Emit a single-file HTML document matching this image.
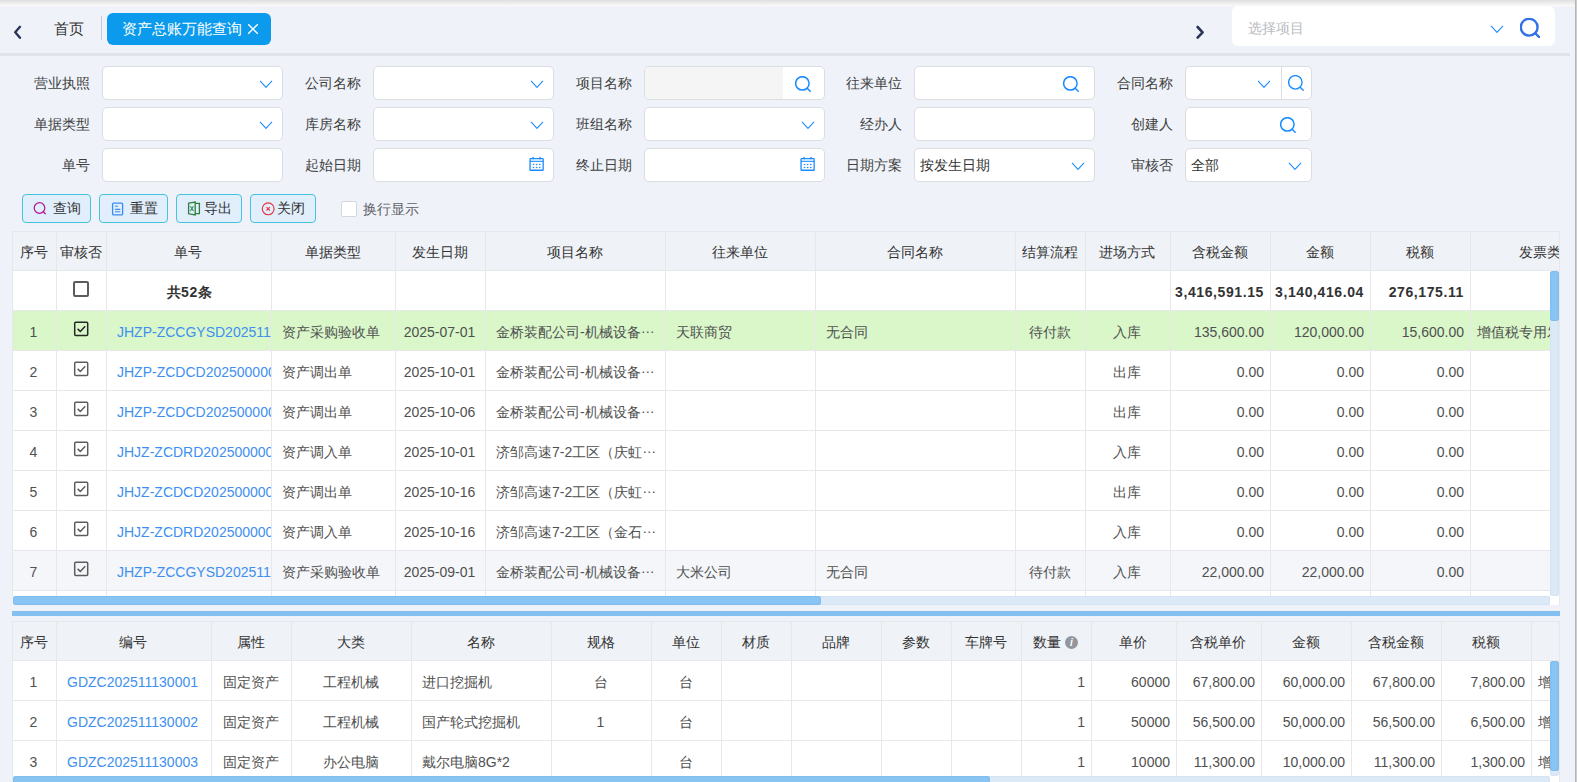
<!DOCTYPE html>
<html><head><meta charset="utf-8"><title>资产总账万能查询</title>
<style>
html,body{margin:0;padding:0}
body{width:1577px;height:782px;overflow:hidden;position:relative;background:#eff3f9;font-family:"Liberation Sans",sans-serif;font-size:14px;color:#333}
</style></head><body>
<div style="position:absolute;left:0;top:0;width:1577px;height:7px;background:linear-gradient(#dfdfdf,#eeeeee 45%,#f8f8f8 80%,#eff3f9)"></div>
<div style="position:absolute;left:1575px;top:0px;width:2px;height:782px;background:linear-gradient(90deg,#a9a9a9,#d9d9d9)"></div>
<svg style="position:absolute;left:12px;top:24px" width="12" height="17" viewBox="0 0 12 17"><path d="M8 2.8 L3.2 8.3 L8 13.8" fill="none" stroke="#2b3557" stroke-width="2.4" stroke-linecap="round" stroke-linejoin="round"/></svg>
<div style="position:absolute;left:54px;top:18px;width:40px;height:22px;font-size:15px;line-height:22px;color:#333">首页</div>
<div style="position:absolute;left:101px;top:16px;width:1px;height:24px;background:#c9ccd2"></div>
<div style="position:absolute;left:107px;top:13px;width:164px;height:32px;background:#0c9bec;border-radius:6px"></div>
<div style="position:absolute;left:122px;top:18px;width:125px;height:22px;font-size:15px;line-height:22px;color:#fff;white-space:nowrap">资产总账万能查询</div>
<svg style="position:absolute;left:247px;top:23px" width="12" height="12" viewBox="0 0 12 12"><path d="M1.2 1.2 L10.8 10.8 M10.8 1.2 L1.2 10.8" stroke="#fff" stroke-width="1.3"/></svg>
<svg style="position:absolute;left:1194px;top:24px" width="12" height="17" viewBox="0 0 12 17"><path d="M3.6 3 L8.6 8.3 L3.6 13.6" fill="none" stroke="#2b3557" stroke-width="2.6" stroke-linecap="round" stroke-linejoin="round"/></svg>
<div style="position:absolute;left:1232px;top:6px;width:323px;height:40px;background:#fff;border-radius:6px"></div>
<div style="position:absolute;left:1248px;top:17px;width:80px;height:22px;font-size:14px;line-height:22px;color:#b9bcc2">选择项目</div>
<svg style="position:absolute;left:1490px;top:25px" width="14" height="8.4" viewBox="0 0 14 8.4"><path d="M1 1 L7.0 7.4 L13 1" fill="none" stroke="#1a8cff" stroke-width="1.1"/></svg>
<svg style="position:absolute;left:1520px;top:18px" width="20" height="20" viewBox="0 0 20 20"><circle cx="9.200000000000001" cy="9.200000000000001" r="8.4" fill="none" stroke="#3272e6" stroke-width="2.4"/><path d="M15.248000000000001 15.248000000000001 L19.2 19.2" stroke="#3272e6" stroke-width="2.4" stroke-linecap="round"/></svg>
<div style="position:absolute;left:0px;top:53px;width:1570px;height:3px;background:#dfe4ec"></div>
<div style="position:absolute;left:-10px;top:66px;width:100px;height:34px;font-size:14px;line-height:34px;color:#404040;text-align:right;white-space:nowrap">营业执照</div>
<div style="position:absolute;left:102px;top:66px;width:181px;height:34px;background:#fff;border:1px solid #dadde2;border-radius:5px;box-sizing:border-box"></div>
<svg style="position:absolute;left:259px;top:80px" width="14" height="8.4" viewBox="0 0 14 8.4"><path d="M1 1 L7.0 7.4 L13 1" fill="none" stroke="#1a8cff" stroke-width="1.1"/></svg>
<div style="position:absolute;left:261px;top:66px;width:100px;height:34px;font-size:14px;line-height:34px;color:#404040;text-align:right;white-space:nowrap">公司名称</div>
<div style="position:absolute;left:373px;top:66px;width:181px;height:34px;background:#fff;border:1px solid #dadde2;border-radius:5px;box-sizing:border-box"></div>
<svg style="position:absolute;left:530px;top:80px" width="14" height="8.4" viewBox="0 0 14 8.4"><path d="M1 1 L7.0 7.4 L13 1" fill="none" stroke="#1a8cff" stroke-width="1.1"/></svg>
<div style="position:absolute;left:532px;top:66px;width:100px;height:34px;font-size:14px;line-height:34px;color:#404040;text-align:right;white-space:nowrap">项目名称</div>
<div style="position:absolute;left:644px;top:66px;width:181px;height:34px;background:#fff;border:1px solid #dadde2;border-radius:5px;box-sizing:border-box"></div>
<div style="position:absolute;left:645px;top:67px;width:138px;height:32px;background:#f5f5f5;border-radius:4px 0 0 4px"></div>
<svg style="position:absolute;left:795px;top:76px" width="16" height="16" viewBox="0 0 16 16"><circle cx="7.36" cy="7.36" r="6.72" fill="none" stroke="#1a8cff" stroke-width="1.5"/><path d="M12.1984 12.1984 L15.2 15.2" stroke="#1a8cff" stroke-width="1.5" stroke-linecap="round"/></svg>
<div style="position:absolute;left:802px;top:66px;width:100px;height:34px;font-size:14px;line-height:34px;color:#404040;text-align:right;white-space:nowrap">往来单位</div>
<div style="position:absolute;left:914px;top:66px;width:181px;height:34px;background:#fff;border:1px solid #dadde2;border-radius:5px;box-sizing:border-box"></div>
<svg style="position:absolute;left:1063px;top:76px" width="16" height="16" viewBox="0 0 16 16"><circle cx="7.36" cy="7.36" r="6.72" fill="none" stroke="#1a8cff" stroke-width="1.5"/><path d="M12.1984 12.1984 L15.2 15.2" stroke="#1a8cff" stroke-width="1.5" stroke-linecap="round"/></svg>
<div style="position:absolute;left:1073px;top:66px;width:100px;height:34px;font-size:14px;line-height:34px;color:#404040;text-align:right;white-space:nowrap">合同名称</div>
<div style="position:absolute;left:1185px;top:66px;width:127px;height:34px;background:#fff;border:1px solid #dadde2;border-radius:5px;box-sizing:border-box"></div>
<svg style="position:absolute;left:1257px;top:80px" width="14" height="8.4" viewBox="0 0 14 8.4"><path d="M1 1 L7.0 7.4 L13 1" fill="none" stroke="#1a8cff" stroke-width="1.1"/></svg>
<div style="position:absolute;left:1281px;top:67px;width:1px;height:32px;background:#dadde2"></div>
<svg style="position:absolute;left:1288px;top:75px" width="16" height="16" viewBox="0 0 16 16"><circle cx="7.36" cy="7.36" r="6.72" fill="none" stroke="#1a8cff" stroke-width="1.4"/><path d="M12.1984 12.1984 L15.2 15.2" stroke="#1a8cff" stroke-width="1.4" stroke-linecap="round"/></svg>
<div style="position:absolute;left:-10px;top:107px;width:100px;height:34px;font-size:14px;line-height:34px;color:#404040;text-align:right;white-space:nowrap">单据类型</div>
<div style="position:absolute;left:102px;top:107px;width:181px;height:34px;background:#fff;border:1px solid #dadde2;border-radius:5px;box-sizing:border-box"></div>
<svg style="position:absolute;left:259px;top:121px" width="14" height="8.4" viewBox="0 0 14 8.4"><path d="M1 1 L7.0 7.4 L13 1" fill="none" stroke="#1a8cff" stroke-width="1.1"/></svg>
<div style="position:absolute;left:261px;top:107px;width:100px;height:34px;font-size:14px;line-height:34px;color:#404040;text-align:right;white-space:nowrap">库房名称</div>
<div style="position:absolute;left:373px;top:107px;width:181px;height:34px;background:#fff;border:1px solid #dadde2;border-radius:5px;box-sizing:border-box"></div>
<svg style="position:absolute;left:530px;top:121px" width="14" height="8.4" viewBox="0 0 14 8.4"><path d="M1 1 L7.0 7.4 L13 1" fill="none" stroke="#1a8cff" stroke-width="1.1"/></svg>
<div style="position:absolute;left:532px;top:107px;width:100px;height:34px;font-size:14px;line-height:34px;color:#404040;text-align:right;white-space:nowrap">班组名称</div>
<div style="position:absolute;left:644px;top:107px;width:181px;height:34px;background:#fff;border:1px solid #dadde2;border-radius:5px;box-sizing:border-box"></div>
<svg style="position:absolute;left:801px;top:121px" width="14" height="8.4" viewBox="0 0 14 8.4"><path d="M1 1 L7.0 7.4 L13 1" fill="none" stroke="#1a8cff" stroke-width="1.1"/></svg>
<div style="position:absolute;left:802px;top:107px;width:100px;height:34px;font-size:14px;line-height:34px;color:#404040;text-align:right;white-space:nowrap">经办人</div>
<div style="position:absolute;left:914px;top:107px;width:181px;height:34px;background:#fff;border:1px solid #dadde2;border-radius:5px;box-sizing:border-box"></div>
<div style="position:absolute;left:1073px;top:107px;width:100px;height:34px;font-size:14px;line-height:34px;color:#404040;text-align:right;white-space:nowrap">创建人</div>
<div style="position:absolute;left:1185px;top:107px;width:127px;height:34px;background:#fff;border:1px solid #dadde2;border-radius:5px;box-sizing:border-box"></div>
<svg style="position:absolute;left:1280px;top:117px" width="16" height="16" viewBox="0 0 16 16"><circle cx="7.36" cy="7.36" r="6.72" fill="none" stroke="#1a8cff" stroke-width="1.5"/><path d="M12.1984 12.1984 L15.2 15.2" stroke="#1a8cff" stroke-width="1.5" stroke-linecap="round"/></svg>
<div style="position:absolute;left:-10px;top:148px;width:100px;height:34px;font-size:14px;line-height:34px;color:#404040;text-align:right;white-space:nowrap">单号</div>
<div style="position:absolute;left:102px;top:148px;width:181px;height:34px;background:#fff;border:1px solid #dadde2;border-radius:5px;box-sizing:border-box"></div>
<div style="position:absolute;left:261px;top:148px;width:100px;height:34px;font-size:14px;line-height:34px;color:#404040;text-align:right;white-space:nowrap">起始日期</div>
<div style="position:absolute;left:373px;top:148px;width:181px;height:34px;background:#fff;border:1px solid #dadde2;border-radius:5px;box-sizing:border-box"></div>
<svg style="position:absolute;left:528px;top:156px" width="17" height="16" viewBox="0 0 17 16"><rect x="2.05" y="2.55" width="13.1" height="11.7" rx="0.6" fill="none" stroke="#1a8cff" stroke-width="1.3"/><path d="M2 5.3 H15.2" stroke="#1a8cff" stroke-width="1.1"/><rect x="4.4" y="0.9" width="1.3" height="2.4" fill="#1a8cff"/><rect x="11.4" y="0.9" width="1.3" height="2.4" fill="#1a8cff"/><rect x="4.8" y="7.9" width="1.5" height="1.2" fill="#1a8cff"/><rect x="7.9" y="7.9" width="1.5" height="1.2" fill="#1a8cff"/><rect x="11.0" y="7.9" width="1.5" height="1.2" fill="#1a8cff"/><rect x="4.8" y="10.9" width="1.5" height="1.2" fill="#1a8cff"/><rect x="7.9" y="10.9" width="1.5" height="1.2" fill="#1a8cff"/><rect x="11.0" y="10.9" width="1.5" height="1.2" fill="#1a8cff"/></svg>
<div style="position:absolute;left:532px;top:148px;width:100px;height:34px;font-size:14px;line-height:34px;color:#404040;text-align:right;white-space:nowrap">终止日期</div>
<div style="position:absolute;left:644px;top:148px;width:181px;height:34px;background:#fff;border:1px solid #dadde2;border-radius:5px;box-sizing:border-box"></div>
<svg style="position:absolute;left:799px;top:156px" width="17" height="16" viewBox="0 0 17 16"><rect x="2.05" y="2.55" width="13.1" height="11.7" rx="0.6" fill="none" stroke="#1a8cff" stroke-width="1.3"/><path d="M2 5.3 H15.2" stroke="#1a8cff" stroke-width="1.1"/><rect x="4.4" y="0.9" width="1.3" height="2.4" fill="#1a8cff"/><rect x="11.4" y="0.9" width="1.3" height="2.4" fill="#1a8cff"/><rect x="4.8" y="7.9" width="1.5" height="1.2" fill="#1a8cff"/><rect x="7.9" y="7.9" width="1.5" height="1.2" fill="#1a8cff"/><rect x="11.0" y="7.9" width="1.5" height="1.2" fill="#1a8cff"/><rect x="4.8" y="10.9" width="1.5" height="1.2" fill="#1a8cff"/><rect x="7.9" y="10.9" width="1.5" height="1.2" fill="#1a8cff"/><rect x="11.0" y="10.9" width="1.5" height="1.2" fill="#1a8cff"/></svg>
<div style="position:absolute;left:802px;top:148px;width:100px;height:34px;font-size:14px;line-height:34px;color:#404040;text-align:right;white-space:nowrap">日期方案</div>
<div style="position:absolute;left:914px;top:148px;width:181px;height:34px;background:#fff;border:1px solid #dadde2;border-radius:5px;box-sizing:border-box"></div>
<svg style="position:absolute;left:1071px;top:162px" width="14" height="8.4" viewBox="0 0 14 8.4"><path d="M1 1 L7.0 7.4 L13 1" fill="none" stroke="#1a8cff" stroke-width="1.1"/></svg>
<div style="position:absolute;left:920px;top:148px;width:120px;height:34px;font-size:14px;line-height:34px;color:#333;white-space:nowrap">按发生日期</div>
<div style="position:absolute;left:1073px;top:148px;width:100px;height:34px;font-size:14px;line-height:34px;color:#404040;text-align:right;white-space:nowrap">审核否</div>
<div style="position:absolute;left:1185px;top:148px;width:127px;height:34px;background:#fff;border:1px solid #dadde2;border-radius:5px;box-sizing:border-box"></div>
<svg style="position:absolute;left:1288px;top:162px" width="14" height="8.4" viewBox="0 0 14 8.4"><path d="M1 1 L7.0 7.4 L13 1" fill="none" stroke="#1a8cff" stroke-width="1.1"/></svg>
<div style="position:absolute;left:1191px;top:148px;width:120px;height:34px;font-size:14px;line-height:34px;color:#333;white-space:nowrap">全部</div>
<div style="position:absolute;left:22px;top:194px;width:69px;height:29px;background:#e1eefb;border:1px solid #45c3dd;border-radius:4px;box-sizing:border-box"></div>
<svg style="position:absolute;left:32px;top:201px" width="16" height="16" viewBox="0 0 16 16"><circle cx="7.5" cy="7" r="5.3" fill="none" stroke="#b5198f" stroke-width="1.25"/><path d="M11.3 10.8 L13.3 12.8" stroke="#b5198f" stroke-width="1.25" stroke-linecap="round"/></svg>
<div style="position:absolute;left:53px;top:194px;width:40px;height:29px;font-size:14px;line-height:29px;color:#333">查询</div>
<div style="position:absolute;left:99px;top:194px;width:69px;height:29px;background:#e1eefb;border:1px solid #45c3dd;border-radius:4px;box-sizing:border-box"></div>
<svg style="position:absolute;left:111px;top:202px" width="13" height="14" viewBox="0 0 13 14"><rect x="1.6" y="1.1" width="10" height="11.8" rx="1" fill="none" stroke="#3b8df3" stroke-width="1.3"/><path d="M4 4.2 H7 M4 7.4 H9.3 M4 9.8 H9.3" stroke="#3b8df3" stroke-width="1.1"/></svg>
<div style="position:absolute;left:130px;top:194px;width:40px;height:29px;font-size:14px;line-height:29px;color:#333">重置</div>
<div style="position:absolute;left:176px;top:194px;width:66px;height:29px;background:#e1eefb;border:1px solid #45c3dd;border-radius:4px;box-sizing:border-box"></div>
<svg style="position:absolute;left:187px;top:201px" width="15" height="15" viewBox="0 0 15 15"><path d="M1.6 2.2 L8.2 1 L8.2 14 L1.6 12.8 Z" fill="none" stroke="#2f7f3a" stroke-width="1.3"/><path d="M8.2 2.3 H12.4 V12.6 H8.2" fill="none" stroke="#2f7f3a" stroke-width="1.3"/><path d="M3.3 5.3 L6.5 10 M6.5 5.3 L3.3 10" stroke="#2a8a5a" stroke-width="1.1"/></svg>
<div style="position:absolute;left:204px;top:194px;width:40px;height:29px;font-size:14px;line-height:29px;color:#333">导出</div>
<div style="position:absolute;left:250px;top:194px;width:66px;height:29px;background:#e1eefb;border:1px solid #45c3dd;border-radius:4px;box-sizing:border-box"></div>
<svg style="position:absolute;left:261px;top:202px" width="15" height="14" viewBox="0 0 15 14"><circle cx="7.2" cy="6.8" r="5.9" fill="none" stroke="#e8363f" stroke-width="1.15"/><path d="M5.5 5.1 L8.9 8.5 M8.9 5.1 L5.5 8.5" stroke="#e8363f" stroke-width="1.1"/></svg>
<div style="position:absolute;left:277px;top:194px;width:40px;height:29px;font-size:14px;line-height:29px;color:#333">关闭</div>
<div style="position:absolute;left:341px;top:201px;width:16px;height:16px;background:#fff;border:1px solid #d4d7dc;border-radius:2px;box-sizing:border-box"></div>
<div style="position:absolute;left:363px;top:197px;width:70px;height:24px;font-size:14px;line-height:24px;color:#606266">换行显示</div>
<div style="position:absolute;left:12px;top:231px;width:1547px;height:365px;overflow:hidden;background:#fff">
<div style="position:absolute;left:0;top:0;width:1547px;height:39px;background:#eff2f7"></div>
<div style="position:absolute;left:1px;top:2px;width:43px;height:38px;line-height:38px;text-align:center;padding:0 3px 0 1px;box-sizing:border-box;white-space:nowrap;overflow:hidden;font-size:14px;color:#333;line-height:39px">序号</div>
<div style="position:absolute;left:45px;top:2px;width:49px;height:38px;line-height:38px;text-align:center;padding:0 3px 0 1px;box-sizing:border-box;white-space:nowrap;overflow:hidden;font-size:14px;color:#333;line-height:39px">审核否</div>
<div style="position:absolute;left:95px;top:2px;width:164px;height:38px;line-height:38px;text-align:center;padding:0 3px 0 1px;box-sizing:border-box;white-space:nowrap;overflow:hidden;font-size:14px;color:#333;line-height:39px">单号</div>
<div style="position:absolute;left:260px;top:2px;width:123px;height:38px;line-height:38px;text-align:center;padding:0 3px 0 1px;box-sizing:border-box;white-space:nowrap;overflow:hidden;font-size:14px;color:#333;line-height:39px">单据类型</div>
<div style="position:absolute;left:384px;top:2px;width:89px;height:38px;line-height:38px;text-align:center;padding:0 3px 0 1px;box-sizing:border-box;white-space:nowrap;overflow:hidden;font-size:14px;color:#333;line-height:39px">发生日期</div>
<div style="position:absolute;left:474px;top:2px;width:179px;height:38px;line-height:38px;text-align:center;padding:0 3px 0 1px;box-sizing:border-box;white-space:nowrap;overflow:hidden;font-size:14px;color:#333;line-height:39px">项目名称</div>
<div style="position:absolute;left:654px;top:2px;width:149px;height:38px;line-height:38px;text-align:center;padding:0 3px 0 1px;box-sizing:border-box;white-space:nowrap;overflow:hidden;font-size:14px;color:#333;line-height:39px">往来单位</div>
<div style="position:absolute;left:804px;top:2px;width:199px;height:38px;line-height:38px;text-align:center;padding:0 3px 0 1px;box-sizing:border-box;white-space:nowrap;overflow:hidden;font-size:14px;color:#333;line-height:39px">合同名称</div>
<div style="position:absolute;left:1004px;top:2px;width:69px;height:38px;line-height:38px;text-align:center;padding:0 3px 0 1px;box-sizing:border-box;white-space:nowrap;overflow:hidden;font-size:14px;color:#333;line-height:39px">结算流程</div>
<div style="position:absolute;left:1074px;top:2px;width:84px;height:38px;line-height:38px;text-align:center;padding:0 3px 0 1px;box-sizing:border-box;white-space:nowrap;overflow:hidden;font-size:14px;color:#333;line-height:39px">进场方式</div>
<div style="position:absolute;left:1159px;top:2px;width:99px;height:38px;line-height:38px;text-align:center;padding:0 3px 0 1px;box-sizing:border-box;white-space:nowrap;overflow:hidden;font-size:14px;color:#333;line-height:39px">含税金额</div>
<div style="position:absolute;left:1259px;top:2px;width:99px;height:38px;line-height:38px;text-align:center;padding:0 3px 0 1px;box-sizing:border-box;white-space:nowrap;overflow:hidden;font-size:14px;color:#333;line-height:39px">金额</div>
<div style="position:absolute;left:1359px;top:2px;width:99px;height:38px;line-height:38px;text-align:center;padding:0 3px 0 1px;box-sizing:border-box;white-space:nowrap;overflow:hidden;font-size:14px;color:#333;line-height:39px">税额</div>
<div style="position:absolute;left:1459px;top:2px;width:153px;height:38px;line-height:38px;text-align:center;padding:0 3px 0 1px;box-sizing:border-box;white-space:nowrap;overflow:hidden;font-size:14px;color:#333;line-height:39px">发票类型</div>
<div style="position:absolute;left:0;top:40px;width:1547px;height:40px;background:#fff"></div>
<svg style="position:absolute;left:61px;top:50px" width="16" height="16" viewBox="0 0 16 16"><rect x="1" y="1" width="14" height="14" rx="1" fill="none" stroke="#5c5c5c" stroke-width="2"/></svg>
<div style="position:absolute;left:95px;top:42px;width:164px;height:39px;line-height:39px;text-align:center;padding:0 3px 0 1px;box-sizing:border-box;white-space:nowrap;overflow:hidden;font-size:14px;color:#333;font-weight:bold;letter-spacing:0.6px;text-overflow:clip;padding-right:0">共52条</div>
<div style="position:absolute;left:1159px;top:42px;width:99px;height:39px;line-height:39px;text-align:right;padding:0 6px 0 4px;box-sizing:border-box;white-space:nowrap;overflow:hidden;font-size:14px;color:#333;font-weight:bold;letter-spacing:0.6px">3,416,591.15</div>
<div style="position:absolute;left:1259px;top:42px;width:99px;height:39px;line-height:39px;text-align:right;padding:0 6px 0 4px;box-sizing:border-box;white-space:nowrap;overflow:hidden;font-size:14px;color:#333;font-weight:bold;letter-spacing:0.6px">3,140,416.04</div>
<div style="position:absolute;left:1359px;top:42px;width:99px;height:39px;line-height:39px;text-align:right;padding:0 6px 0 4px;box-sizing:border-box;white-space:nowrap;overflow:hidden;font-size:14px;color:#333;font-weight:bold;letter-spacing:0.6px">276,175.11</div>
<div style="position:absolute;left:0;top:80px;width:1547px;height:40px;background:#d9f7c9"></div>
<div style="position:absolute;left:1px;top:82px;width:43px;height:39px;line-height:39px;text-align:center;padding:0 3px 0 1px;box-sizing:border-box;white-space:nowrap;overflow:hidden;font-size:14px;color:#505050">1</div>
<svg style="position:absolute;left:61px;top:90px" width="16" height="16" viewBox="0 0 16 16"><rect x="1.7" y="1.2" width="13" height="13.4" rx="1" fill="none" stroke="#262626" stroke-width="1.5"/><path d="M4.6 7.9 L7.3 10.4 L12.2 5.2" fill="none" stroke="#262626" stroke-width="1.5"/></svg>
<div style="position:absolute;left:95px;top:82px;width:164px;height:39px;line-height:39px;text-align:left;padding:0 6px 0 10px;box-sizing:border-box;white-space:nowrap;overflow:hidden;font-size:14px;color:#3e8ff0;text-overflow:clip;padding-right:0">JHZP-ZCCGYSD2025111</div>
<div style="position:absolute;left:260px;top:82px;width:123px;height:39px;line-height:39px;text-align:left;padding:0 6px 0 10px;box-sizing:border-box;white-space:nowrap;overflow:hidden;font-size:14px;color:#505050">资产采购验收单</div>
<div style="position:absolute;left:384px;top:82px;width:89px;height:39px;line-height:39px;text-align:center;padding:0 3px 0 1px;box-sizing:border-box;white-space:nowrap;overflow:hidden;font-size:14px;color:#505050">2025-07-01</div>
<div style="position:absolute;left:474px;top:82px;width:179px;height:39px;line-height:39px;text-align:left;padding:0 6px 0 10px;box-sizing:border-box;white-space:nowrap;overflow:hidden;font-size:14px;color:#505050">金桥装配公司-机械设备<span style="position:relative;top:-4px;letter-spacing:-0.5px">…</span></div>
<div style="position:absolute;left:654px;top:82px;width:149px;height:39px;line-height:39px;text-align:left;padding:0 6px 0 10px;box-sizing:border-box;white-space:nowrap;overflow:hidden;font-size:14px;color:#505050">天联商贸</div>
<div style="position:absolute;left:804px;top:82px;width:199px;height:39px;line-height:39px;text-align:left;padding:0 6px 0 10px;box-sizing:border-box;white-space:nowrap;overflow:hidden;font-size:14px;color:#505050">无合同</div>
<div style="position:absolute;left:1004px;top:82px;width:69px;height:39px;line-height:39px;text-align:center;padding:0 3px 0 1px;box-sizing:border-box;white-space:nowrap;overflow:hidden;font-size:14px;color:#505050">待付款</div>
<div style="position:absolute;left:1074px;top:82px;width:84px;height:39px;line-height:39px;text-align:center;padding:0 3px 0 1px;box-sizing:border-box;white-space:nowrap;overflow:hidden;font-size:14px;color:#505050">入库</div>
<div style="position:absolute;left:1159px;top:82px;width:99px;height:39px;line-height:39px;text-align:right;padding:0 6px 0 4px;box-sizing:border-box;white-space:nowrap;overflow:hidden;font-size:14px;color:#505050">135,600.00</div>
<div style="position:absolute;left:1259px;top:82px;width:99px;height:39px;line-height:39px;text-align:right;padding:0 6px 0 4px;box-sizing:border-box;white-space:nowrap;overflow:hidden;font-size:14px;color:#505050">120,000.00</div>
<div style="position:absolute;left:1359px;top:82px;width:99px;height:39px;line-height:39px;text-align:right;padding:0 6px 0 4px;box-sizing:border-box;white-space:nowrap;overflow:hidden;font-size:14px;color:#505050">15,600.00</div>
<div style="position:absolute;left:1459px;top:82px;width:153px;height:39px;line-height:39px;text-align:left;padding:0 6px 0 10px;box-sizing:border-box;white-space:nowrap;overflow:hidden;font-size:14px;color:#505050;padding-left:6px">增值税专用发票</div>
<div style="position:absolute;left:0;top:120px;width:1547px;height:40px;background:#fff"></div>
<div style="position:absolute;left:1px;top:122px;width:43px;height:39px;line-height:39px;text-align:center;padding:0 3px 0 1px;box-sizing:border-box;white-space:nowrap;overflow:hidden;font-size:14px;color:#505050">2</div>
<svg style="position:absolute;left:61px;top:130px" width="16" height="16" viewBox="0 0 16 16"><rect x="1.7" y="1.2" width="13" height="13.4" rx="1" fill="none" stroke="#5c5c5c" stroke-width="1.5"/><path d="M4.6 7.9 L7.3 10.4 L12.2 5.2" fill="none" stroke="#5c5c5c" stroke-width="1.5"/></svg>
<div style="position:absolute;left:95px;top:122px;width:164px;height:39px;line-height:39px;text-align:left;padding:0 6px 0 10px;box-sizing:border-box;white-space:nowrap;overflow:hidden;font-size:14px;color:#3e8ff0;text-overflow:clip;padding-right:0">JHZP-ZCDCD202500000</div>
<div style="position:absolute;left:260px;top:122px;width:123px;height:39px;line-height:39px;text-align:left;padding:0 6px 0 10px;box-sizing:border-box;white-space:nowrap;overflow:hidden;font-size:14px;color:#505050">资产调出单</div>
<div style="position:absolute;left:384px;top:122px;width:89px;height:39px;line-height:39px;text-align:center;padding:0 3px 0 1px;box-sizing:border-box;white-space:nowrap;overflow:hidden;font-size:14px;color:#505050">2025-10-01</div>
<div style="position:absolute;left:474px;top:122px;width:179px;height:39px;line-height:39px;text-align:left;padding:0 6px 0 10px;box-sizing:border-box;white-space:nowrap;overflow:hidden;font-size:14px;color:#505050">金桥装配公司-机械设备<span style="position:relative;top:-4px;letter-spacing:-0.5px">…</span></div>
<div style="position:absolute;left:1074px;top:122px;width:84px;height:39px;line-height:39px;text-align:center;padding:0 3px 0 1px;box-sizing:border-box;white-space:nowrap;overflow:hidden;font-size:14px;color:#505050">出库</div>
<div style="position:absolute;left:1159px;top:122px;width:99px;height:39px;line-height:39px;text-align:right;padding:0 6px 0 4px;box-sizing:border-box;white-space:nowrap;overflow:hidden;font-size:14px;color:#505050">0.00</div>
<div style="position:absolute;left:1259px;top:122px;width:99px;height:39px;line-height:39px;text-align:right;padding:0 6px 0 4px;box-sizing:border-box;white-space:nowrap;overflow:hidden;font-size:14px;color:#505050">0.00</div>
<div style="position:absolute;left:1359px;top:122px;width:99px;height:39px;line-height:39px;text-align:right;padding:0 6px 0 4px;box-sizing:border-box;white-space:nowrap;overflow:hidden;font-size:14px;color:#505050">0.00</div>
<div style="position:absolute;left:0;top:160px;width:1547px;height:40px;background:#fff"></div>
<div style="position:absolute;left:1px;top:162px;width:43px;height:39px;line-height:39px;text-align:center;padding:0 3px 0 1px;box-sizing:border-box;white-space:nowrap;overflow:hidden;font-size:14px;color:#505050">3</div>
<svg style="position:absolute;left:61px;top:170px" width="16" height="16" viewBox="0 0 16 16"><rect x="1.7" y="1.2" width="13" height="13.4" rx="1" fill="none" stroke="#5c5c5c" stroke-width="1.5"/><path d="M4.6 7.9 L7.3 10.4 L12.2 5.2" fill="none" stroke="#5c5c5c" stroke-width="1.5"/></svg>
<div style="position:absolute;left:95px;top:162px;width:164px;height:39px;line-height:39px;text-align:left;padding:0 6px 0 10px;box-sizing:border-box;white-space:nowrap;overflow:hidden;font-size:14px;color:#3e8ff0;text-overflow:clip;padding-right:0">JHZP-ZCDCD202500000</div>
<div style="position:absolute;left:260px;top:162px;width:123px;height:39px;line-height:39px;text-align:left;padding:0 6px 0 10px;box-sizing:border-box;white-space:nowrap;overflow:hidden;font-size:14px;color:#505050">资产调出单</div>
<div style="position:absolute;left:384px;top:162px;width:89px;height:39px;line-height:39px;text-align:center;padding:0 3px 0 1px;box-sizing:border-box;white-space:nowrap;overflow:hidden;font-size:14px;color:#505050">2025-10-06</div>
<div style="position:absolute;left:474px;top:162px;width:179px;height:39px;line-height:39px;text-align:left;padding:0 6px 0 10px;box-sizing:border-box;white-space:nowrap;overflow:hidden;font-size:14px;color:#505050">金桥装配公司-机械设备<span style="position:relative;top:-4px;letter-spacing:-0.5px">…</span></div>
<div style="position:absolute;left:1074px;top:162px;width:84px;height:39px;line-height:39px;text-align:center;padding:0 3px 0 1px;box-sizing:border-box;white-space:nowrap;overflow:hidden;font-size:14px;color:#505050">出库</div>
<div style="position:absolute;left:1159px;top:162px;width:99px;height:39px;line-height:39px;text-align:right;padding:0 6px 0 4px;box-sizing:border-box;white-space:nowrap;overflow:hidden;font-size:14px;color:#505050">0.00</div>
<div style="position:absolute;left:1259px;top:162px;width:99px;height:39px;line-height:39px;text-align:right;padding:0 6px 0 4px;box-sizing:border-box;white-space:nowrap;overflow:hidden;font-size:14px;color:#505050">0.00</div>
<div style="position:absolute;left:1359px;top:162px;width:99px;height:39px;line-height:39px;text-align:right;padding:0 6px 0 4px;box-sizing:border-box;white-space:nowrap;overflow:hidden;font-size:14px;color:#505050">0.00</div>
<div style="position:absolute;left:0;top:200px;width:1547px;height:40px;background:#fff"></div>
<div style="position:absolute;left:1px;top:202px;width:43px;height:39px;line-height:39px;text-align:center;padding:0 3px 0 1px;box-sizing:border-box;white-space:nowrap;overflow:hidden;font-size:14px;color:#505050">4</div>
<svg style="position:absolute;left:61px;top:210px" width="16" height="16" viewBox="0 0 16 16"><rect x="1.7" y="1.2" width="13" height="13.4" rx="1" fill="none" stroke="#5c5c5c" stroke-width="1.5"/><path d="M4.6 7.9 L7.3 10.4 L12.2 5.2" fill="none" stroke="#5c5c5c" stroke-width="1.5"/></svg>
<div style="position:absolute;left:95px;top:202px;width:164px;height:39px;line-height:39px;text-align:left;padding:0 6px 0 10px;box-sizing:border-box;white-space:nowrap;overflow:hidden;font-size:14px;color:#3e8ff0;text-overflow:clip;padding-right:0">JHJZ-ZCDRD202500000</div>
<div style="position:absolute;left:260px;top:202px;width:123px;height:39px;line-height:39px;text-align:left;padding:0 6px 0 10px;box-sizing:border-box;white-space:nowrap;overflow:hidden;font-size:14px;color:#505050">资产调入单</div>
<div style="position:absolute;left:384px;top:202px;width:89px;height:39px;line-height:39px;text-align:center;padding:0 3px 0 1px;box-sizing:border-box;white-space:nowrap;overflow:hidden;font-size:14px;color:#505050">2025-10-01</div>
<div style="position:absolute;left:474px;top:202px;width:179px;height:39px;line-height:39px;text-align:left;padding:0 6px 0 10px;box-sizing:border-box;white-space:nowrap;overflow:hidden;font-size:14px;color:#505050">济邹高速7-2工区（庆虹<span style="position:relative;top:-4px;letter-spacing:-0.5px">…</span></div>
<div style="position:absolute;left:1074px;top:202px;width:84px;height:39px;line-height:39px;text-align:center;padding:0 3px 0 1px;box-sizing:border-box;white-space:nowrap;overflow:hidden;font-size:14px;color:#505050">入库</div>
<div style="position:absolute;left:1159px;top:202px;width:99px;height:39px;line-height:39px;text-align:right;padding:0 6px 0 4px;box-sizing:border-box;white-space:nowrap;overflow:hidden;font-size:14px;color:#505050">0.00</div>
<div style="position:absolute;left:1259px;top:202px;width:99px;height:39px;line-height:39px;text-align:right;padding:0 6px 0 4px;box-sizing:border-box;white-space:nowrap;overflow:hidden;font-size:14px;color:#505050">0.00</div>
<div style="position:absolute;left:1359px;top:202px;width:99px;height:39px;line-height:39px;text-align:right;padding:0 6px 0 4px;box-sizing:border-box;white-space:nowrap;overflow:hidden;font-size:14px;color:#505050">0.00</div>
<div style="position:absolute;left:0;top:240px;width:1547px;height:40px;background:#fff"></div>
<div style="position:absolute;left:1px;top:242px;width:43px;height:39px;line-height:39px;text-align:center;padding:0 3px 0 1px;box-sizing:border-box;white-space:nowrap;overflow:hidden;font-size:14px;color:#505050">5</div>
<svg style="position:absolute;left:61px;top:250px" width="16" height="16" viewBox="0 0 16 16"><rect x="1.7" y="1.2" width="13" height="13.4" rx="1" fill="none" stroke="#5c5c5c" stroke-width="1.5"/><path d="M4.6 7.9 L7.3 10.4 L12.2 5.2" fill="none" stroke="#5c5c5c" stroke-width="1.5"/></svg>
<div style="position:absolute;left:95px;top:242px;width:164px;height:39px;line-height:39px;text-align:left;padding:0 6px 0 10px;box-sizing:border-box;white-space:nowrap;overflow:hidden;font-size:14px;color:#3e8ff0;text-overflow:clip;padding-right:0">JHJZ-ZCDCD202500000</div>
<div style="position:absolute;left:260px;top:242px;width:123px;height:39px;line-height:39px;text-align:left;padding:0 6px 0 10px;box-sizing:border-box;white-space:nowrap;overflow:hidden;font-size:14px;color:#505050">资产调出单</div>
<div style="position:absolute;left:384px;top:242px;width:89px;height:39px;line-height:39px;text-align:center;padding:0 3px 0 1px;box-sizing:border-box;white-space:nowrap;overflow:hidden;font-size:14px;color:#505050">2025-10-16</div>
<div style="position:absolute;left:474px;top:242px;width:179px;height:39px;line-height:39px;text-align:left;padding:0 6px 0 10px;box-sizing:border-box;white-space:nowrap;overflow:hidden;font-size:14px;color:#505050">济邹高速7-2工区（庆虹<span style="position:relative;top:-4px;letter-spacing:-0.5px">…</span></div>
<div style="position:absolute;left:1074px;top:242px;width:84px;height:39px;line-height:39px;text-align:center;padding:0 3px 0 1px;box-sizing:border-box;white-space:nowrap;overflow:hidden;font-size:14px;color:#505050">出库</div>
<div style="position:absolute;left:1159px;top:242px;width:99px;height:39px;line-height:39px;text-align:right;padding:0 6px 0 4px;box-sizing:border-box;white-space:nowrap;overflow:hidden;font-size:14px;color:#505050">0.00</div>
<div style="position:absolute;left:1259px;top:242px;width:99px;height:39px;line-height:39px;text-align:right;padding:0 6px 0 4px;box-sizing:border-box;white-space:nowrap;overflow:hidden;font-size:14px;color:#505050">0.00</div>
<div style="position:absolute;left:1359px;top:242px;width:99px;height:39px;line-height:39px;text-align:right;padding:0 6px 0 4px;box-sizing:border-box;white-space:nowrap;overflow:hidden;font-size:14px;color:#505050">0.00</div>
<div style="position:absolute;left:0;top:280px;width:1547px;height:40px;background:#fff"></div>
<div style="position:absolute;left:1px;top:282px;width:43px;height:39px;line-height:39px;text-align:center;padding:0 3px 0 1px;box-sizing:border-box;white-space:nowrap;overflow:hidden;font-size:14px;color:#505050">6</div>
<svg style="position:absolute;left:61px;top:290px" width="16" height="16" viewBox="0 0 16 16"><rect x="1.7" y="1.2" width="13" height="13.4" rx="1" fill="none" stroke="#5c5c5c" stroke-width="1.5"/><path d="M4.6 7.9 L7.3 10.4 L12.2 5.2" fill="none" stroke="#5c5c5c" stroke-width="1.5"/></svg>
<div style="position:absolute;left:95px;top:282px;width:164px;height:39px;line-height:39px;text-align:left;padding:0 6px 0 10px;box-sizing:border-box;white-space:nowrap;overflow:hidden;font-size:14px;color:#3e8ff0;text-overflow:clip;padding-right:0">JHJZ-ZCDRD202500000</div>
<div style="position:absolute;left:260px;top:282px;width:123px;height:39px;line-height:39px;text-align:left;padding:0 6px 0 10px;box-sizing:border-box;white-space:nowrap;overflow:hidden;font-size:14px;color:#505050">资产调入单</div>
<div style="position:absolute;left:384px;top:282px;width:89px;height:39px;line-height:39px;text-align:center;padding:0 3px 0 1px;box-sizing:border-box;white-space:nowrap;overflow:hidden;font-size:14px;color:#505050">2025-10-16</div>
<div style="position:absolute;left:474px;top:282px;width:179px;height:39px;line-height:39px;text-align:left;padding:0 6px 0 10px;box-sizing:border-box;white-space:nowrap;overflow:hidden;font-size:14px;color:#505050">济邹高速7-2工区（金石<span style="position:relative;top:-4px;letter-spacing:-0.5px">…</span></div>
<div style="position:absolute;left:1074px;top:282px;width:84px;height:39px;line-height:39px;text-align:center;padding:0 3px 0 1px;box-sizing:border-box;white-space:nowrap;overflow:hidden;font-size:14px;color:#505050">入库</div>
<div style="position:absolute;left:1159px;top:282px;width:99px;height:39px;line-height:39px;text-align:right;padding:0 6px 0 4px;box-sizing:border-box;white-space:nowrap;overflow:hidden;font-size:14px;color:#505050">0.00</div>
<div style="position:absolute;left:1259px;top:282px;width:99px;height:39px;line-height:39px;text-align:right;padding:0 6px 0 4px;box-sizing:border-box;white-space:nowrap;overflow:hidden;font-size:14px;color:#505050">0.00</div>
<div style="position:absolute;left:1359px;top:282px;width:99px;height:39px;line-height:39px;text-align:right;padding:0 6px 0 4px;box-sizing:border-box;white-space:nowrap;overflow:hidden;font-size:14px;color:#505050">0.00</div>
<div style="position:absolute;left:0;top:320px;width:1547px;height:40px;background:#f4f6f9"></div>
<div style="position:absolute;left:1px;top:322px;width:43px;height:39px;line-height:39px;text-align:center;padding:0 3px 0 1px;box-sizing:border-box;white-space:nowrap;overflow:hidden;font-size:14px;color:#505050">7</div>
<svg style="position:absolute;left:61px;top:330px" width="16" height="16" viewBox="0 0 16 16"><rect x="1.7" y="1.2" width="13" height="13.4" rx="1" fill="none" stroke="#5c5c5c" stroke-width="1.5"/><path d="M4.6 7.9 L7.3 10.4 L12.2 5.2" fill="none" stroke="#5c5c5c" stroke-width="1.5"/></svg>
<div style="position:absolute;left:95px;top:322px;width:164px;height:39px;line-height:39px;text-align:left;padding:0 6px 0 10px;box-sizing:border-box;white-space:nowrap;overflow:hidden;font-size:14px;color:#3e8ff0;text-overflow:clip;padding-right:0">JHZP-ZCCGYSD2025111</div>
<div style="position:absolute;left:260px;top:322px;width:123px;height:39px;line-height:39px;text-align:left;padding:0 6px 0 10px;box-sizing:border-box;white-space:nowrap;overflow:hidden;font-size:14px;color:#505050">资产采购验收单</div>
<div style="position:absolute;left:384px;top:322px;width:89px;height:39px;line-height:39px;text-align:center;padding:0 3px 0 1px;box-sizing:border-box;white-space:nowrap;overflow:hidden;font-size:14px;color:#505050">2025-09-01</div>
<div style="position:absolute;left:474px;top:322px;width:179px;height:39px;line-height:39px;text-align:left;padding:0 6px 0 10px;box-sizing:border-box;white-space:nowrap;overflow:hidden;font-size:14px;color:#505050">金桥装配公司-机械设备<span style="position:relative;top:-4px;letter-spacing:-0.5px">…</span></div>
<div style="position:absolute;left:654px;top:322px;width:149px;height:39px;line-height:39px;text-align:left;padding:0 6px 0 10px;box-sizing:border-box;white-space:nowrap;overflow:hidden;font-size:14px;color:#505050">大米公司</div>
<div style="position:absolute;left:804px;top:322px;width:199px;height:39px;line-height:39px;text-align:left;padding:0 6px 0 10px;box-sizing:border-box;white-space:nowrap;overflow:hidden;font-size:14px;color:#505050">无合同</div>
<div style="position:absolute;left:1004px;top:322px;width:69px;height:39px;line-height:39px;text-align:center;padding:0 3px 0 1px;box-sizing:border-box;white-space:nowrap;overflow:hidden;font-size:14px;color:#505050">待付款</div>
<div style="position:absolute;left:1074px;top:322px;width:84px;height:39px;line-height:39px;text-align:center;padding:0 3px 0 1px;box-sizing:border-box;white-space:nowrap;overflow:hidden;font-size:14px;color:#505050">入库</div>
<div style="position:absolute;left:1159px;top:322px;width:99px;height:39px;line-height:39px;text-align:right;padding:0 6px 0 4px;box-sizing:border-box;white-space:nowrap;overflow:hidden;font-size:14px;color:#505050">22,000.00</div>
<div style="position:absolute;left:1259px;top:322px;width:99px;height:39px;line-height:39px;text-align:right;padding:0 6px 0 4px;box-sizing:border-box;white-space:nowrap;overflow:hidden;font-size:14px;color:#505050">22,000.00</div>
<div style="position:absolute;left:1359px;top:322px;width:99px;height:39px;line-height:39px;text-align:right;padding:0 6px 0 4px;box-sizing:border-box;white-space:nowrap;overflow:hidden;font-size:14px;color:#505050">0.00</div>
<div style="position:absolute;left:44px;top:0;width:1px;height:365px;background:#e6e8eb"></div>
<div style="position:absolute;left:94px;top:0;width:1px;height:365px;background:#e6e8eb"></div>
<div style="position:absolute;left:259px;top:0;width:1px;height:365px;background:#e6e8eb"></div>
<div style="position:absolute;left:383px;top:0;width:1px;height:365px;background:#e6e8eb"></div>
<div style="position:absolute;left:473px;top:0;width:1px;height:365px;background:#e6e8eb"></div>
<div style="position:absolute;left:653px;top:0;width:1px;height:365px;background:#e6e8eb"></div>
<div style="position:absolute;left:803px;top:0;width:1px;height:365px;background:#e6e8eb"></div>
<div style="position:absolute;left:1003px;top:0;width:1px;height:365px;background:#e6e8eb"></div>
<div style="position:absolute;left:1073px;top:0;width:1px;height:365px;background:#e6e8eb"></div>
<div style="position:absolute;left:1158px;top:0;width:1px;height:365px;background:#e6e8eb"></div>
<div style="position:absolute;left:1258px;top:0;width:1px;height:365px;background:#e6e8eb"></div>
<div style="position:absolute;left:1358px;top:0;width:1px;height:365px;background:#e6e8eb"></div>
<div style="position:absolute;left:1458px;top:0;width:1px;height:365px;background:#e6e8eb"></div>
<div style="position:absolute;left:1612px;top:0;width:1px;height:365px;background:#e6e8eb"></div>
<div style="position:absolute;left:0;top:39px;width:1547px;height:1px;background:#e6e8eb"></div>
<div style="position:absolute;left:0;top:79px;width:1547px;height:1px;background:#e6e8eb"></div>
<div style="position:absolute;left:0;top:119px;width:1547px;height:1px;background:#e6e8eb"></div>
<div style="position:absolute;left:0;top:159px;width:1547px;height:1px;background:#e6e8eb"></div>
<div style="position:absolute;left:0;top:199px;width:1547px;height:1px;background:#e6e8eb"></div>
<div style="position:absolute;left:0;top:239px;width:1547px;height:1px;background:#e6e8eb"></div>
<div style="position:absolute;left:0;top:279px;width:1547px;height:1px;background:#e6e8eb"></div>
<div style="position:absolute;left:0;top:319px;width:1547px;height:1px;background:#e6e8eb"></div>
<div style="position:absolute;left:0;top:359px;width:1547px;height:1px;background:#e6e8eb"></div>
<div style="position:absolute;left:0;top:0;width:1547px;height:1px;background:#e6e8eb"></div>
<div style="position:absolute;left:0;top:0;width:1px;height:365px;background:#e6e8eb"></div>
</div>
<div style="position:absolute;left:1559px;top:231px;width:1px;height:375px;background:#e6e8eb"></div>
<div style="position:absolute;left:1550px;top:271px;width:9px;height:325px;background:#dce9f7;border-radius:3px;box-shadow:inset 0 0 1.5px rgba(120,160,210,0.35)"></div>
<div style="position:absolute;left:1550px;top:271px;width:9px;height:50px;background:#89c5f3;border-radius:3px;box-shadow:inset 0 0 1.5px rgba(50,120,200,0.45)"></div>
<div style="position:absolute;left:13px;top:596px;width:1537px;height:9px;background:#dce9f7;border-radius:3px;box-shadow:inset 0 0 1.5px rgba(120,160,210,0.35)"></div>
<div style="position:absolute;left:13px;top:596px;width:808px;height:9px;background:#89c5f3;border-radius:3px;box-shadow:inset 0 0 1.5px rgba(50,120,200,0.45)"></div>
<div style="position:absolute;left:1550px;top:596px;width:9px;height:9px;background:#fff"></div>
<div style="position:absolute;left:12px;top:611px;width:1548px;height:5px;background:#84c1f1"></div>
<div style="position:absolute;left:12px;top:621px;width:1547px;height:161px;overflow:hidden;background:#fff">
<div style="position:absolute;left:0;top:0;width:1547px;height:39px;background:#eff2f7"></div>
<div style="position:absolute;left:1px;top:2px;width:43px;height:38px;line-height:38px;text-align:center;padding:0 3px 0 1px;box-sizing:border-box;white-space:nowrap;overflow:hidden;font-size:14px;color:#333;line-height:39px">序号</div>
<div style="position:absolute;left:45px;top:2px;width:154px;height:38px;line-height:38px;text-align:center;padding:0 3px 0 1px;box-sizing:border-box;white-space:nowrap;overflow:hidden;font-size:14px;color:#333;line-height:39px">编号</div>
<div style="position:absolute;left:200px;top:2px;width:79px;height:38px;line-height:38px;text-align:center;padding:0 3px 0 1px;box-sizing:border-box;white-space:nowrap;overflow:hidden;font-size:14px;color:#333;line-height:39px">属性</div>
<div style="position:absolute;left:280px;top:2px;width:119px;height:38px;line-height:38px;text-align:center;padding:0 3px 0 1px;box-sizing:border-box;white-space:nowrap;overflow:hidden;font-size:14px;color:#333;line-height:39px">大类</div>
<div style="position:absolute;left:400px;top:2px;width:139px;height:38px;line-height:38px;text-align:center;padding:0 3px 0 1px;box-sizing:border-box;white-space:nowrap;overflow:hidden;font-size:14px;color:#333;line-height:39px">名称</div>
<div style="position:absolute;left:540px;top:2px;width:99px;height:38px;line-height:38px;text-align:center;padding:0 3px 0 1px;box-sizing:border-box;white-space:nowrap;overflow:hidden;font-size:14px;color:#333;line-height:39px">规格</div>
<div style="position:absolute;left:640px;top:2px;width:69px;height:38px;line-height:38px;text-align:center;padding:0 3px 0 1px;box-sizing:border-box;white-space:nowrap;overflow:hidden;font-size:14px;color:#333;line-height:39px">单位</div>
<div style="position:absolute;left:710px;top:2px;width:69px;height:38px;line-height:38px;text-align:center;padding:0 3px 0 1px;box-sizing:border-box;white-space:nowrap;overflow:hidden;font-size:14px;color:#333;line-height:39px">材质</div>
<div style="position:absolute;left:780px;top:2px;width:89px;height:38px;line-height:38px;text-align:center;padding:0 3px 0 1px;box-sizing:border-box;white-space:nowrap;overflow:hidden;font-size:14px;color:#333;line-height:39px">品牌</div>
<div style="position:absolute;left:870px;top:2px;width:69px;height:38px;line-height:38px;text-align:center;padding:0 3px 0 1px;box-sizing:border-box;white-space:nowrap;overflow:hidden;font-size:14px;color:#333;line-height:39px">参数</div>
<div style="position:absolute;left:940px;top:2px;width:69px;height:38px;line-height:38px;text-align:center;padding:0 3px 0 1px;box-sizing:border-box;white-space:nowrap;overflow:hidden;font-size:14px;color:#333;line-height:39px">车牌号</div>
<div style="position:absolute;left:1010px;top:2px;width:69px;height:38px;line-height:38px;text-align:center;padding:0 3px 0 1px;box-sizing:border-box;white-space:nowrap;overflow:hidden;font-size:14px;color:#333;line-height:39px">数量 <span style="display:inline-block;width:13px;height:13px;border-radius:50%;background:#93969c;color:#fff;font-size:10px;line-height:13px;font-style:italic;font-weight:bold;text-align:center;vertical-align:1px">i</span></div>
<div style="position:absolute;left:1080px;top:2px;width:84px;height:38px;line-height:38px;text-align:center;padding:0 3px 0 1px;box-sizing:border-box;white-space:nowrap;overflow:hidden;font-size:14px;color:#333;line-height:39px">单价</div>
<div style="position:absolute;left:1165px;top:2px;width:84px;height:38px;line-height:38px;text-align:center;padding:0 3px 0 1px;box-sizing:border-box;white-space:nowrap;overflow:hidden;font-size:14px;color:#333;line-height:39px">含税单价</div>
<div style="position:absolute;left:1250px;top:2px;width:89px;height:38px;line-height:38px;text-align:center;padding:0 3px 0 1px;box-sizing:border-box;white-space:nowrap;overflow:hidden;font-size:14px;color:#333;line-height:39px">金额</div>
<div style="position:absolute;left:1340px;top:2px;width:89px;height:38px;line-height:38px;text-align:center;padding:0 3px 0 1px;box-sizing:border-box;white-space:nowrap;overflow:hidden;font-size:14px;color:#333;line-height:39px">含税金额</div>
<div style="position:absolute;left:1430px;top:2px;width:89px;height:38px;line-height:38px;text-align:center;padding:0 3px 0 1px;box-sizing:border-box;white-space:nowrap;overflow:hidden;font-size:14px;color:#333;line-height:39px">税额</div>
<div style="position:absolute;left:1520px;top:2px;width:118px;height:38px;line-height:38px;text-align:center;padding:0 3px 0 1px;box-sizing:border-box;white-space:nowrap;overflow:hidden;font-size:14px;color:#333;line-height:39px"></div>
<div style="position:absolute;left:0;top:40px;width:1547px;height:40px;background:#fff"></div>
<div style="position:absolute;left:1px;top:42px;width:43px;height:39px;line-height:39px;text-align:center;padding:0 3px 0 1px;box-sizing:border-box;white-space:nowrap;overflow:hidden;font-size:14px;color:#505050">1</div>
<div style="position:absolute;left:45px;top:42px;width:154px;height:39px;line-height:39px;text-align:left;padding:0 6px 0 10px;box-sizing:border-box;white-space:nowrap;overflow:hidden;font-size:14px;color:#3e8ff0;text-overflow:clip;padding-right:0">GDZC202511130001</div>
<div style="position:absolute;left:200px;top:42px;width:79px;height:39px;line-height:39px;text-align:center;padding:0 3px 0 1px;box-sizing:border-box;white-space:nowrap;overflow:hidden;font-size:14px;color:#505050">固定资产</div>
<div style="position:absolute;left:280px;top:42px;width:119px;height:39px;line-height:39px;text-align:center;padding:0 3px 0 1px;box-sizing:border-box;white-space:nowrap;overflow:hidden;font-size:14px;color:#505050">工程机械</div>
<div style="position:absolute;left:400px;top:42px;width:139px;height:39px;line-height:39px;text-align:left;padding:0 6px 0 10px;box-sizing:border-box;white-space:nowrap;overflow:hidden;font-size:14px;color:#505050">进口挖掘机</div>
<div style="position:absolute;left:540px;top:42px;width:99px;height:39px;line-height:39px;text-align:center;padding:0 3px 0 1px;box-sizing:border-box;white-space:nowrap;overflow:hidden;font-size:14px;color:#505050">台</div>
<div style="position:absolute;left:640px;top:42px;width:69px;height:39px;line-height:39px;text-align:center;padding:0 3px 0 1px;box-sizing:border-box;white-space:nowrap;overflow:hidden;font-size:14px;color:#505050">台</div>
<div style="position:absolute;left:1010px;top:42px;width:69px;height:39px;line-height:39px;text-align:right;padding:0 6px 0 4px;box-sizing:border-box;white-space:nowrap;overflow:hidden;font-size:14px;color:#505050">1</div>
<div style="position:absolute;left:1080px;top:42px;width:84px;height:39px;line-height:39px;text-align:right;padding:0 6px 0 4px;box-sizing:border-box;white-space:nowrap;overflow:hidden;font-size:14px;color:#505050">60000</div>
<div style="position:absolute;left:1165px;top:42px;width:84px;height:39px;line-height:39px;text-align:right;padding:0 6px 0 4px;box-sizing:border-box;white-space:nowrap;overflow:hidden;font-size:14px;color:#505050">67,800.00</div>
<div style="position:absolute;left:1250px;top:42px;width:89px;height:39px;line-height:39px;text-align:right;padding:0 6px 0 4px;box-sizing:border-box;white-space:nowrap;overflow:hidden;font-size:14px;color:#505050">60,000.00</div>
<div style="position:absolute;left:1340px;top:42px;width:89px;height:39px;line-height:39px;text-align:right;padding:0 6px 0 4px;box-sizing:border-box;white-space:nowrap;overflow:hidden;font-size:14px;color:#505050">67,800.00</div>
<div style="position:absolute;left:1430px;top:42px;width:89px;height:39px;line-height:39px;text-align:right;padding:0 6px 0 4px;box-sizing:border-box;white-space:nowrap;overflow:hidden;font-size:14px;color:#505050">7,800.00</div>
<div style="position:absolute;left:1520px;top:42px;width:118px;height:39px;line-height:39px;text-align:left;padding:0 6px 0 10px;box-sizing:border-box;white-space:nowrap;overflow:hidden;font-size:14px;color:#505050;padding-left:6px">增值税专用发票</div>
<div style="position:absolute;left:0;top:80px;width:1547px;height:40px;background:#fff"></div>
<div style="position:absolute;left:1px;top:82px;width:43px;height:39px;line-height:39px;text-align:center;padding:0 3px 0 1px;box-sizing:border-box;white-space:nowrap;overflow:hidden;font-size:14px;color:#505050">2</div>
<div style="position:absolute;left:45px;top:82px;width:154px;height:39px;line-height:39px;text-align:left;padding:0 6px 0 10px;box-sizing:border-box;white-space:nowrap;overflow:hidden;font-size:14px;color:#3e8ff0;text-overflow:clip;padding-right:0">GDZC202511130002</div>
<div style="position:absolute;left:200px;top:82px;width:79px;height:39px;line-height:39px;text-align:center;padding:0 3px 0 1px;box-sizing:border-box;white-space:nowrap;overflow:hidden;font-size:14px;color:#505050">固定资产</div>
<div style="position:absolute;left:280px;top:82px;width:119px;height:39px;line-height:39px;text-align:center;padding:0 3px 0 1px;box-sizing:border-box;white-space:nowrap;overflow:hidden;font-size:14px;color:#505050">工程机械</div>
<div style="position:absolute;left:400px;top:82px;width:139px;height:39px;line-height:39px;text-align:left;padding:0 6px 0 10px;box-sizing:border-box;white-space:nowrap;overflow:hidden;font-size:14px;color:#505050">国产轮式挖掘机</div>
<div style="position:absolute;left:540px;top:82px;width:99px;height:39px;line-height:39px;text-align:center;padding:0 3px 0 1px;box-sizing:border-box;white-space:nowrap;overflow:hidden;font-size:14px;color:#505050">1</div>
<div style="position:absolute;left:640px;top:82px;width:69px;height:39px;line-height:39px;text-align:center;padding:0 3px 0 1px;box-sizing:border-box;white-space:nowrap;overflow:hidden;font-size:14px;color:#505050">台</div>
<div style="position:absolute;left:1010px;top:82px;width:69px;height:39px;line-height:39px;text-align:right;padding:0 6px 0 4px;box-sizing:border-box;white-space:nowrap;overflow:hidden;font-size:14px;color:#505050">1</div>
<div style="position:absolute;left:1080px;top:82px;width:84px;height:39px;line-height:39px;text-align:right;padding:0 6px 0 4px;box-sizing:border-box;white-space:nowrap;overflow:hidden;font-size:14px;color:#505050">50000</div>
<div style="position:absolute;left:1165px;top:82px;width:84px;height:39px;line-height:39px;text-align:right;padding:0 6px 0 4px;box-sizing:border-box;white-space:nowrap;overflow:hidden;font-size:14px;color:#505050">56,500.00</div>
<div style="position:absolute;left:1250px;top:82px;width:89px;height:39px;line-height:39px;text-align:right;padding:0 6px 0 4px;box-sizing:border-box;white-space:nowrap;overflow:hidden;font-size:14px;color:#505050">50,000.00</div>
<div style="position:absolute;left:1340px;top:82px;width:89px;height:39px;line-height:39px;text-align:right;padding:0 6px 0 4px;box-sizing:border-box;white-space:nowrap;overflow:hidden;font-size:14px;color:#505050">56,500.00</div>
<div style="position:absolute;left:1430px;top:82px;width:89px;height:39px;line-height:39px;text-align:right;padding:0 6px 0 4px;box-sizing:border-box;white-space:nowrap;overflow:hidden;font-size:14px;color:#505050">6,500.00</div>
<div style="position:absolute;left:1520px;top:82px;width:118px;height:39px;line-height:39px;text-align:left;padding:0 6px 0 10px;box-sizing:border-box;white-space:nowrap;overflow:hidden;font-size:14px;color:#505050;padding-left:6px">增值税专用发票</div>
<div style="position:absolute;left:0;top:120px;width:1547px;height:40px;background:#fff"></div>
<div style="position:absolute;left:1px;top:122px;width:43px;height:39px;line-height:39px;text-align:center;padding:0 3px 0 1px;box-sizing:border-box;white-space:nowrap;overflow:hidden;font-size:14px;color:#505050">3</div>
<div style="position:absolute;left:45px;top:122px;width:154px;height:39px;line-height:39px;text-align:left;padding:0 6px 0 10px;box-sizing:border-box;white-space:nowrap;overflow:hidden;font-size:14px;color:#3e8ff0;text-overflow:clip;padding-right:0">GDZC202511130003</div>
<div style="position:absolute;left:200px;top:122px;width:79px;height:39px;line-height:39px;text-align:center;padding:0 3px 0 1px;box-sizing:border-box;white-space:nowrap;overflow:hidden;font-size:14px;color:#505050">固定资产</div>
<div style="position:absolute;left:280px;top:122px;width:119px;height:39px;line-height:39px;text-align:center;padding:0 3px 0 1px;box-sizing:border-box;white-space:nowrap;overflow:hidden;font-size:14px;color:#505050">办公电脑</div>
<div style="position:absolute;left:400px;top:122px;width:139px;height:39px;line-height:39px;text-align:left;padding:0 6px 0 10px;box-sizing:border-box;white-space:nowrap;overflow:hidden;font-size:14px;color:#505050">戴尔电脑8G*2</div>
<div style="position:absolute;left:640px;top:122px;width:69px;height:39px;line-height:39px;text-align:center;padding:0 3px 0 1px;box-sizing:border-box;white-space:nowrap;overflow:hidden;font-size:14px;color:#505050">台</div>
<div style="position:absolute;left:1010px;top:122px;width:69px;height:39px;line-height:39px;text-align:right;padding:0 6px 0 4px;box-sizing:border-box;white-space:nowrap;overflow:hidden;font-size:14px;color:#505050">1</div>
<div style="position:absolute;left:1080px;top:122px;width:84px;height:39px;line-height:39px;text-align:right;padding:0 6px 0 4px;box-sizing:border-box;white-space:nowrap;overflow:hidden;font-size:14px;color:#505050">10000</div>
<div style="position:absolute;left:1165px;top:122px;width:84px;height:39px;line-height:39px;text-align:right;padding:0 6px 0 4px;box-sizing:border-box;white-space:nowrap;overflow:hidden;font-size:14px;color:#505050">11,300.00</div>
<div style="position:absolute;left:1250px;top:122px;width:89px;height:39px;line-height:39px;text-align:right;padding:0 6px 0 4px;box-sizing:border-box;white-space:nowrap;overflow:hidden;font-size:14px;color:#505050">10,000.00</div>
<div style="position:absolute;left:1340px;top:122px;width:89px;height:39px;line-height:39px;text-align:right;padding:0 6px 0 4px;box-sizing:border-box;white-space:nowrap;overflow:hidden;font-size:14px;color:#505050">11,300.00</div>
<div style="position:absolute;left:1430px;top:122px;width:89px;height:39px;line-height:39px;text-align:right;padding:0 6px 0 4px;box-sizing:border-box;white-space:nowrap;overflow:hidden;font-size:14px;color:#505050">1,300.00</div>
<div style="position:absolute;left:1520px;top:122px;width:118px;height:39px;line-height:39px;text-align:left;padding:0 6px 0 10px;box-sizing:border-box;white-space:nowrap;overflow:hidden;font-size:14px;color:#505050;padding-left:6px">增值税专用发票</div>
<div style="position:absolute;left:44px;top:0;width:1px;height:161px;background:#e6e8eb"></div>
<div style="position:absolute;left:199px;top:0;width:1px;height:161px;background:#e6e8eb"></div>
<div style="position:absolute;left:279px;top:0;width:1px;height:161px;background:#e6e8eb"></div>
<div style="position:absolute;left:399px;top:0;width:1px;height:161px;background:#e6e8eb"></div>
<div style="position:absolute;left:539px;top:0;width:1px;height:161px;background:#e6e8eb"></div>
<div style="position:absolute;left:639px;top:0;width:1px;height:161px;background:#e6e8eb"></div>
<div style="position:absolute;left:709px;top:0;width:1px;height:161px;background:#e6e8eb"></div>
<div style="position:absolute;left:779px;top:0;width:1px;height:161px;background:#e6e8eb"></div>
<div style="position:absolute;left:869px;top:0;width:1px;height:161px;background:#e6e8eb"></div>
<div style="position:absolute;left:939px;top:0;width:1px;height:161px;background:#e6e8eb"></div>
<div style="position:absolute;left:1009px;top:0;width:1px;height:161px;background:#e6e8eb"></div>
<div style="position:absolute;left:1079px;top:0;width:1px;height:161px;background:#e6e8eb"></div>
<div style="position:absolute;left:1164px;top:0;width:1px;height:161px;background:#e6e8eb"></div>
<div style="position:absolute;left:1249px;top:0;width:1px;height:161px;background:#e6e8eb"></div>
<div style="position:absolute;left:1339px;top:0;width:1px;height:161px;background:#e6e8eb"></div>
<div style="position:absolute;left:1429px;top:0;width:1px;height:161px;background:#e6e8eb"></div>
<div style="position:absolute;left:1519px;top:0;width:1px;height:161px;background:#e6e8eb"></div>
<div style="position:absolute;left:1638px;top:0;width:1px;height:161px;background:#e6e8eb"></div>
<div style="position:absolute;left:0;top:39px;width:1547px;height:1px;background:#e6e8eb"></div>
<div style="position:absolute;left:0;top:79px;width:1547px;height:1px;background:#e6e8eb"></div>
<div style="position:absolute;left:0;top:119px;width:1547px;height:1px;background:#e6e8eb"></div>
<div style="position:absolute;left:0;top:159px;width:1547px;height:1px;background:#e6e8eb"></div>
<div style="position:absolute;left:0;top:0;width:1547px;height:1px;background:#e6e8eb"></div>
<div style="position:absolute;left:0;top:0;width:1px;height:161px;background:#e6e8eb"></div>
</div>
<div style="position:absolute;left:1559px;top:621px;width:1px;height:161px;background:#e6e8eb"></div>
<div style="position:absolute;left:1550px;top:661px;width:9px;height:115px;background:#dce9f7;border-radius:3px;box-shadow:inset 0 0 1.5px rgba(120,160,210,0.35)"></div>
<div style="position:absolute;left:1550px;top:661px;width:9px;height:110px;background:#89c5f3;border-radius:3px;box-shadow:inset 0 0 1.5px rgba(50,120,200,0.45)"></div>
<div style="position:absolute;left:13px;top:776px;width:1537px;height:9px;background:#dce9f7;border-radius:3px;box-shadow:inset 0 0 1.5px rgba(120,160,210,0.35)"></div>
<div style="position:absolute;left:13px;top:776px;width:977px;height:9px;background:#89c5f3;border-radius:3px;box-shadow:inset 0 0 1.5px rgba(50,120,200,0.45)"></div>
<div style="position:absolute;left:1550px;top:776px;width:9px;height:9px;background:#fff"></div>
</body></html>
